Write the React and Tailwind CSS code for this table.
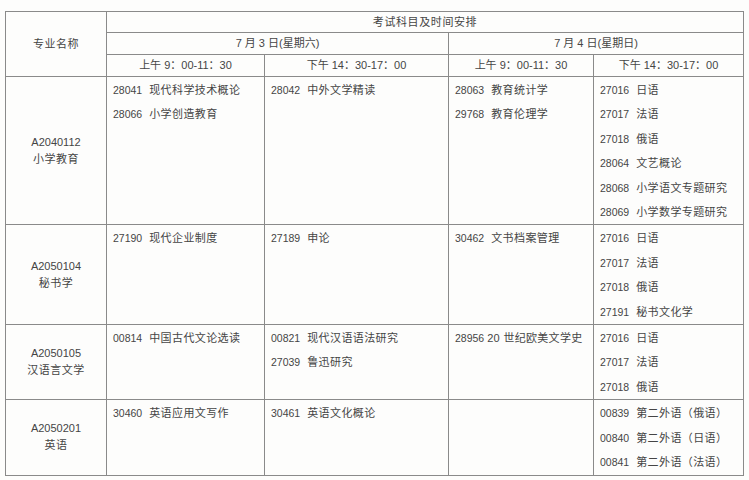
import React from "react";

const rows = [
  {
    code: "A2040112",
    name: "小学教育",
    h: "h-[148px]",
    cells: [
      [["28041", "现代科学技术概论"], ["28066", "小学创造教育"]],
      [["28042", "中外文学精读"]],
      [["28063", "教育统计学"], ["29768", "教育伦理学"]],
      [
        ["27016", "日语"],
        ["27017", "法语"],
        ["27018", "俄语"],
        ["28064", "文艺概论"],
        ["28068", "小学语文专题研究"],
        ["28069", "小学数学专题研究"],
      ],
    ],
  },
  {
    code: "A2050104",
    name: "秘书学",
    h: "h-[97px]",
    cells: [
      [["27190", "现代企业制度"]],
      [["27189", "申论"]],
      [["30462", "文书档案管理"]],
      [
        ["27016", "日语"],
        ["27017", "法语"],
        ["27018", "俄语"],
        ["27191", "秘书文化学"],
      ],
    ],
  },
  {
    code: "A2050105",
    name: "汉语言文学",
    h: "h-[74px]",
    cells: [
      [["00814", "中国古代文论选读"]],
      [["00821", "现代汉语语法研究"], ["27039", "鲁迅研究"]],
      [["28956", "20 世纪欧美文学史", true]],
      [
        ["27016", "日语"],
        ["27017", "法语"],
        ["27018", "俄语"],
      ],
    ],
  },
  {
    code: "A2050201",
    name: "英语",
    h: "h-[74px]",
    cells: [
      [["30460", "英语应用文写作"]],
      [["30461", "英语文化概论"]],
      [],
      [
        ["00839", "第二外语（俄语）"],
        ["00840", "第二外语（日语）"],
        ["00841", "第二外语（法语）"],
      ],
    ],
  },
];

const Item = ({ item }) => (
  <div className="flex items-baseline leading-[24.4px] whitespace-nowrap">
    <span className="text-[10.5px]">{item[0]}</span>
    <span className={item[2] ? "ml-[3px] tracking-[0.3px]" : "ml-[7px] tracking-[0.4px]"}>
      {item[1]}
    </span>
  </div>
);

export default function App() {
  return (
    <div
      className="w-[749px] h-[480px] bg-[#fdfdfc] pt-[11px] pl-[5px] text-[#454545] text-[11px]"
      style={{ fontFamily: '"Liberation Sans", "Noto Sans CJK SC", sans-serif' }}
    >
      <table className="table-fixed border-collapse border border-[#7a7a7a] w-[738px]">
        <colgroup>
          <col className="w-[101px]" />
          <col className="w-[158px]" />
          <col className="w-[184px]" />
          <col className="w-[145px]" />
          <col className="w-[150px]" />
        </colgroup>
        <tbody>
          <tr className="h-[21px]">
            <td rowSpan={3} className="border border-[#8a8a8a] text-center align-middle tracking-[0.5px]">
              专业名称
            </td>
            <td colSpan={4} className="border border-[#8a8a8a] text-center tracking-[0.6px]">
              考试科目及时间安排
            </td>
          </tr>
          <tr className="h-[22px]">
            <td colSpan={2} className="border border-[#8a8a8a] text-center">
              7 月 3 日(星期六)
            </td>
            <td colSpan={2} className="border border-[#8a8a8a] text-center">
              7 月 4 日(星期日)
            </td>
          </tr>
          <tr className="h-[22px]">
            <td className="border border-[#8a8a8a] text-center">上午 9：00-11：30</td>
            <td className="border border-[#8a8a8a] text-center">下午 14：30-17：00</td>
            <td className="border border-[#8a8a8a] text-center">上午 9：00-11：30</td>
            <td className="border border-[#8a8a8a] text-center">下午 14：30-17：00</td>
          </tr>
          {rows.map((r) => (
            <tr key={r.code} className={r.h}>
              <td className="border border-[#8a8a8a] text-center align-middle leading-[17px]">
                <div>{r.code}</div>
                <div className="tracking-[0.5px]">{r.name}</div>
              </td>
              {r.cells.map((c, i) => (
                <td key={i} className="border border-[#8a8a8a] align-top pl-[6px] pt-[1px]">
                  {c.map((it) => (
                    <Item key={it[0]} item={it} />
                  ))}
                </td>
              ))}
            </tr>
          ))}
        </tbody>
      </table>
    </div>
  );
}
